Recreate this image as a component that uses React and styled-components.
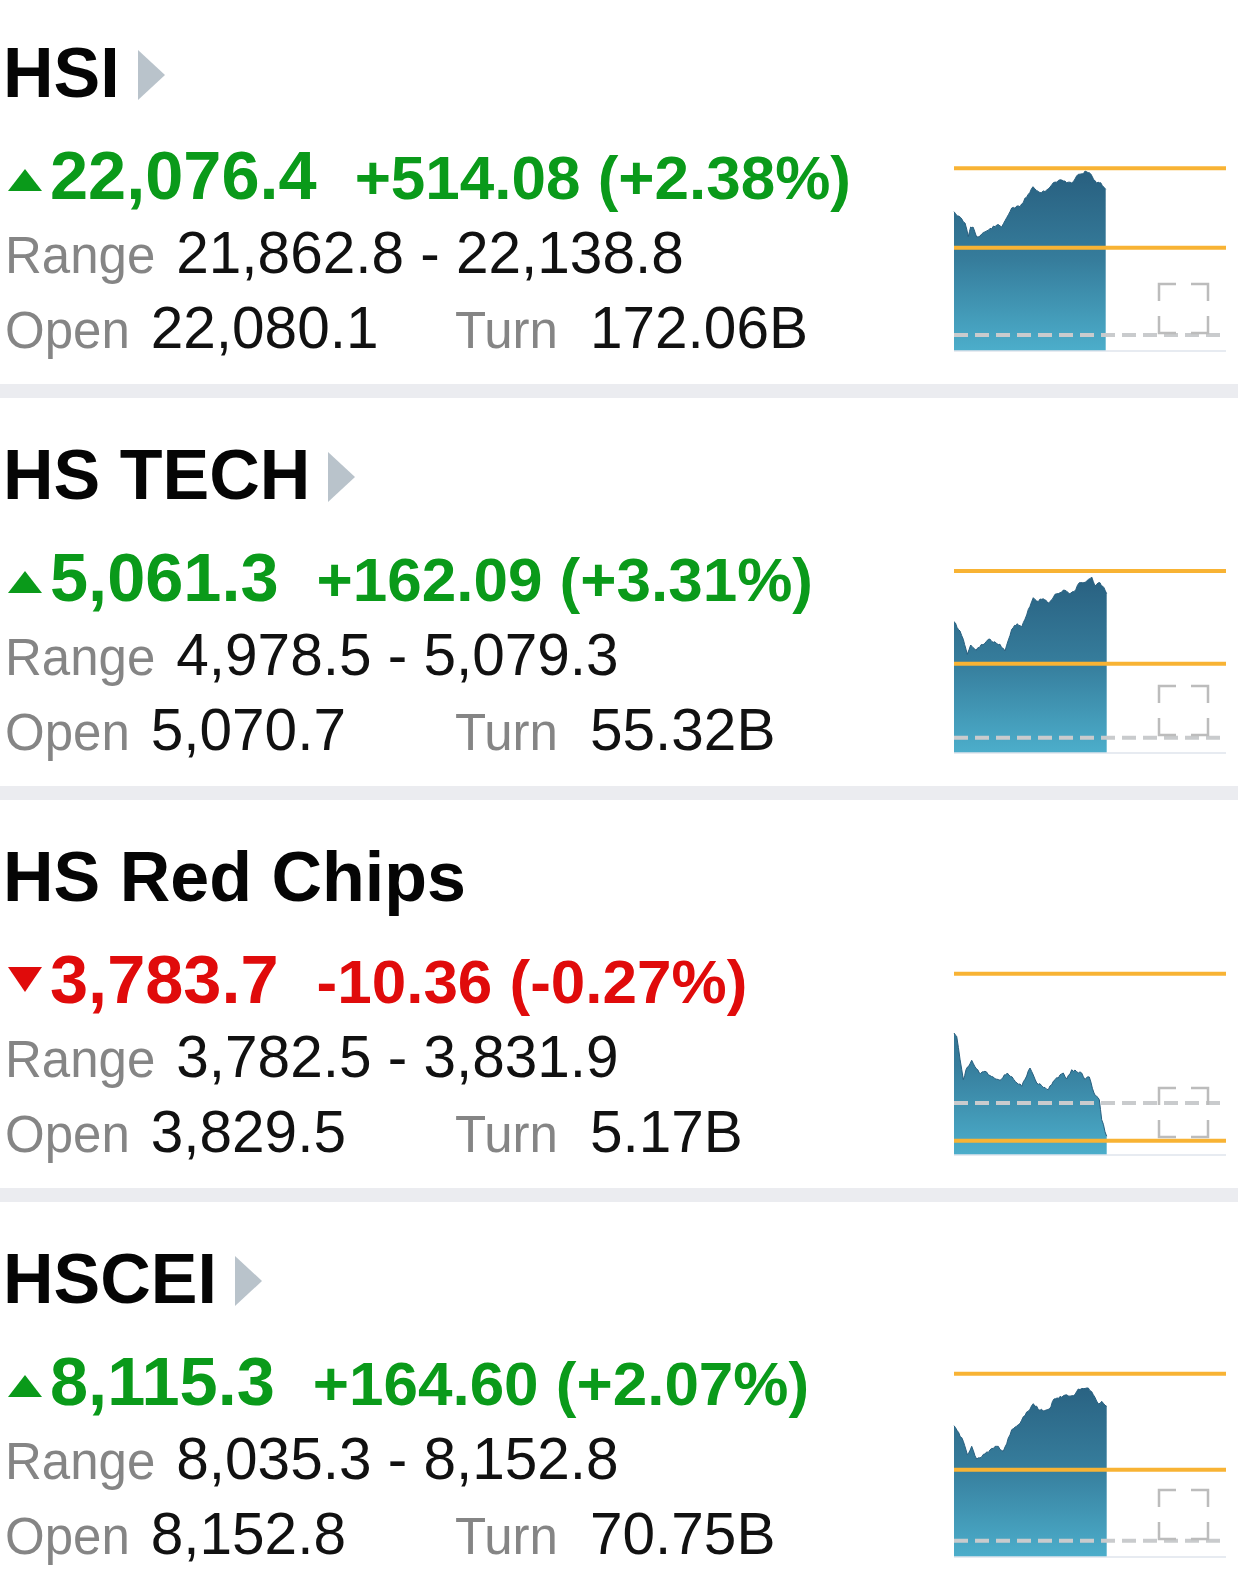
import React from 'react';
import styled, { createGlobalStyle } from 'styled-components';

const GlobalStyle = createGlobalStyle`
    body {
        margin: 0;
        background: #fff;
        font-family: "Liberation Sans", Arial, Helvetica, sans-serif;
    }
`

const Page = styled.div`
    margin-top: -4px;
    background: #fff;
`

const Card = styled.section`
    display: flex;
    height: 388px;
    border-bottom: 14px solid #ebecf0;
`

const Info = styled.div`
    flex: 1;
    min-width: 0;
    padding: 37px 0 0 5px;
`

const TitleRow = styled.div`
    display: flex;
    align-items: baseline;
    height: 80px;
    gap: 18px;
`

const Title = styled.h2`
    margin: 0 0 0 -2px;
    font-size: 70px;
    line-height: 80px;
    font-weight: 700;
    color: #050505;
    white-space: nowrap;
`

const TitleArrow = styled.svg`
    flex: none;
    overflow: visible;
`

const PriceRow = styled.div`
    display: flex;
    align-items: baseline;
    height: 80px;
    margin-top: 23px;
    color: ${props => props.up ? '#0a9a1a' : '#e00b0b'};
    font-weight: 700;
    white-space: nowrap;
`

const Marker = styled.svg`
    flex: none;
    margin: 0 8px 0 3px;
`

const Price = styled.span`
    font-size: 68.5px;
    line-height: 80px;
`

const Change = styled.span`
    font-size: 62px;
    line-height: 80px;
    margin-left: 38px;
`

const StatRow = styled.div`
    display: flex;
    align-items: baseline;
    height: 75px;
    white-space: nowrap;
`

const OpenCell = styled.div`
    display: flex;
    align-items: baseline;
    width: 450px;
    flex: none;
`

const Label = styled.span`
    font-size: 51px;
    line-height: 74px;
    color: #858585;
`

const Value = styled.span`
    font-size: 58.5px;
    line-height: 74px;
    color: #111;
    margin-left: ${props => props.wide ? '32px' : '21px'};
`

const ChartBox = styled.div`
    flex: none;
    width: 273px;
    margin-right: 12px;
    padding-top: 160px;

    svg {
        display: block;
    }
`

const AXIS = 195;

// fill in a few wiggles between the hand-picked points
function jagged(points, seed) {
    let s = seed;
    const rnd = () => {
        s = (s * 9301 + 49297) % 233280;
        return s / 233280;
    };
    const out = [points[0]];
    for (let i = 1; i < points.length; i++) {
        const [x0, y0] = points[i - 1];
        const [x1, y1] = points[i];
        const steps = Math.max(1, Math.ceil((x1 - x0) / 1.8));
        for (let k = 1; k <= steps; k++) {
            const t = k / steps;
            const jit = k === steps ? 0 : (rnd() - 0.5) * 2.4;
            out.push([x0 + (x1 - x0) * t, y0 + (y1 - y0) * t + jit]);
        }
    }
    return out;
}

const MiniChart = ({ id, chart }) => {
    const pts = jagged(chart.points, chart.seed);
    const first = pts[0];
    const last = pts[pts.length - 1];
    const d = `M${first[0]},${AXIS} ` + pts.map(p => `L${p[0].toFixed(1)},${p[1].toFixed(1)}`).join(' ') + ` L${last[0]},${AXIS} Z`;
    const line = 'M' + pts.map(p => `${p[0].toFixed(1)},${p[1].toFixed(1)}`).join(' L');
    return (
        <svg width="273" height="200" viewBox="0 0 273 200">
            <defs>
                <linearGradient id={id} x1="0" y1="15" x2="0" y2={AXIS} gradientUnits="userSpaceOnUse">
                    <stop offset="0" stopColor="#285f7f" />
                    <stop offset="0.5" stopColor="#367d9c" />
                    <stop offset="1" stopColor="#4caecb" />
                </linearGradient>
            </defs>
            <path d={d} fill={`url(#${id})`} />
            <path d={line} fill="none" stroke="#285f7f" strokeWidth="1" />
            {chart.orange.map(y => (
                <line key={y} x1="1" x2="273" y1={y} y2={y} stroke="#f8b334" strokeWidth="4" />
            ))}
            <line x1="1" x2="273" y1={chart.dash} y2={chart.dash} stroke="#c9cbcd" strokeWidth="4" strokeDasharray="14 7" />
            <line x1="1" x2="273" y1={AXIS} y2={AXIS} stroke="#dfe5ec" strokeWidth="1.5" />
            <path
                d="M206,145 V128 H223 M238,128 H255 V145 M206,160 V177 H223 M238,177 H255 V160"
                fill="none"
                stroke="#bcbcbc"
                strokeWidth="2.5"
            />
        </svg>
    );
};

// triangle sits above the text baseline, so the svg keeps empty room below it
const UpMarker = () => (
    <Marker width="34" height="30" viewBox="0 0 34 30">
        <polygon points="17,0 34,22 0,22" fill="#0a9a1a" />
    </Marker>
);

const DownMarker = () => (
    <Marker width="34" height="36" viewBox="0 0 34 36">
        <polygon points="0,0 34,0 17,25" fill="#e00b0b" />
    </Marker>
);

const cards = [
    {
        name: 'HSI', arrow: true, up: true,
        price: '22,076.4', change: '+514.08 (+2.38%)',
        range: '21,862.8 - 22,138.8', open: '22,080.1', turn: '172.06B',
        chart: {
            seed: 11, orange: [12.3, 91.7], dash: 179,
            points: [[1, 55.7], [12, 67], [15.3, 80.7], [17.7, 71], [20, 71], [23.7, 81], [43.7, 69], [48.7, 71], [58.7, 52], [67, 50.7], [80, 30.7], [87, 36.7], [93.7, 34], [100.3, 26.7], [108.7, 24], [113.7, 26.7], [120.3, 25.7], [125.3, 18.3], [133.7, 15.7], [136.3, 16.7], [143.7, 27.3], [147.7, 26.7], [152.7, 33.3]],
        },
    },
    {
        name: 'HS TECH', arrow: true, up: true,
        price: '5,061.3', change: '+162.09 (+3.31%)',
        range: '4,978.5 - 5,079.3', open: '5,070.7', turn: '55.32B',
        chart: {
            seed: 23, orange: [13, 105.7], dash: 179.7,
            points: [[1, 63.7], [7, 73], [10.3, 81.3], [14.3, 96.3], [17.7, 87], [23, 92.3], [35.3, 81.3], [47, 86.3], [52, 93], [58.7, 71.3], [64.3, 65.7], [68.7, 69], [80.3, 39.7], [83.7, 43], [88.7, 41.3], [96.3, 44.7], [102, 36.3], [112, 32.3], [116.3, 35.7], [121, 33.7], [126.3, 24.7], [133.7, 23], [138.7, 19], [142, 28], [147, 24.7], [151, 29.7], [153.7, 35.7]],
        },
    },
    {
        name: 'HS Red Chips', arrow: false, up: false,
        price: '3,783.7', change: '-10.36 (-0.27%)',
        range: '3,782.5 - 3,831.9', open: '3,829.5', turn: '5.17B',
        chart: {
            seed: 37, orange: [13.7, 180.7], dash: 143,
            points: [[1, 73], [3.7, 76.3], [10.3, 119.7], [13, 109.7], [18.7, 100.3], [26.3, 113], [32, 111.3], [40.3, 117], [47, 120.3], [54.3, 113], [68.7, 126.3], [77, 108], [83.7, 123], [95.3, 129.7], [100.3, 121.3], [110.3, 113], [113.7, 119], [118.7, 109.7], [128.7, 113], [132, 119.7], [136.3, 117], [141, 133], [143.7, 136.3], [146.3, 139.7], [148.7, 159.7], [153.7, 176.3]],
        },
    },
    {
        name: 'HSCEI', arrow: true, up: true,
        price: '8,115.3', change: '+164.60 (+2.07%)',
        range: '8,035.3 - 8,152.8', open: '8,152.8', turn: '70.75B',
        chart: {
            seed: 51, orange: [11.7, 107.7], dash: 178.7,
            points: [[1, 63.7], [10.3, 79.3], [14.3, 92.7], [18.7, 84.3], [23.7, 97], [43.7, 84.3], [50.3, 89.3], [58.7, 67.7], [65.3, 62.7], [80.3, 41.7], [87, 48.3], [96.3, 47], [101, 37], [110.3, 33.7], [120.3, 33.7], [125.3, 27], [135.3, 26], [140.3, 32.7], [145.3, 41.7], [148.7, 39.3], [153.7, 44.3]],
        },
    },
];

const IndexCard = ({ item, index }) => (
    <Card>
        <Info>
            <TitleRow>
                <Title>{item.name}</Title>
                {item.arrow && (
                    <TitleArrow width="27" height="50" viewBox="0 0 27 50">
                        <polygon points="0,3 27,28 0,53" fill="#b9c3cb" />
                    </TitleArrow>
                )}
            </TitleRow>
            <PriceRow up={item.up}>
                {item.up ? <UpMarker /> : <DownMarker />}
                <Price>{item.price}</Price>
                <Change>{item.change}</Change>
            </PriceRow>
            <StatRow>
                <Label>Range</Label>
                <Value>{item.range}</Value>
            </StatRow>
            <StatRow>
                <OpenCell>
                    <Label>Open</Label>
                    <Value>{item.open}</Value>
                </OpenCell>
                <Label>Turn</Label>
                <Value wide>{item.turn}</Value>
            </StatRow>
        </Info>
        <ChartBox>
            <MiniChart id={`area-${index}`} chart={item.chart} />
        </ChartBox>
    </Card>
);

const App = () => (
    <>
        <GlobalStyle />
        <Page>
            {cards.map((item, i) => (
                <IndexCard key={item.name} item={item} index={i} />
            ))}
        </Page>
    </>
);

export default App;
